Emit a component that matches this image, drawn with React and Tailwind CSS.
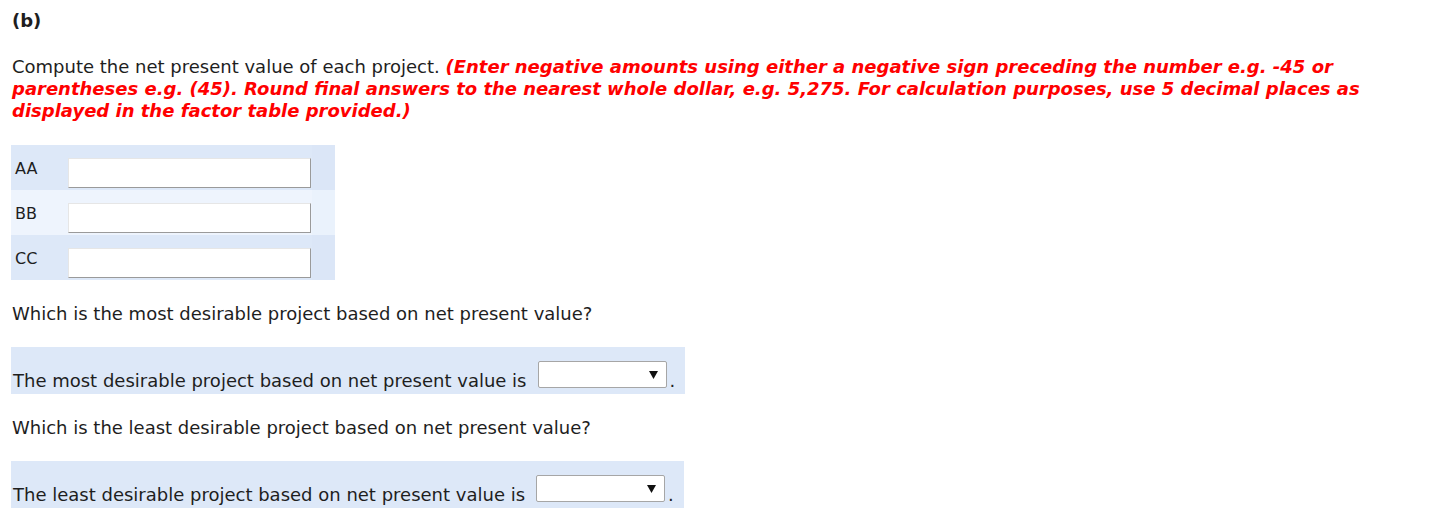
import React from "react";

function Row({ label, bg, bg3 }) {
  return (
    <div className={`flex h-[45px] ${bg}`}>
      <div className="w-[55px] pl-[4px] pt-[14px] text-[16px] leading-[20px]">{label}</div>
      <div className="w-[246px] flex items-end pb-[2px] pl-[2px]">
        <div className="w-[243px] h-[30px] bg-white border border-t-[#e6e6e6] border-l-[#e6e6e6] border-r-[#9a9a9a] border-b-[#9a9a9a]"></div>
      </div>
      <div className={`w-[23px] ${bg3}`}></div>
    </div>
  );
}

function SelectBox() {
  return (
    <div className="ml-[11px] mb-[4px] w-[129px] h-[27px] bg-white border border-[#a6a6a6] rounded-[2px] flex items-center justify-end pr-[8px]">
      <svg width="9" height="9" viewBox="0 0 9 9">
        <polygon points="0,1 9,1 4.5,9" fill="#111" />
      </svg>
    </div>
  );
}

function Band({ text }) {
  return (
    <div className="inline-flex items-end bg-[#dde8f8] pt-[14px] pb-[2px] pl-[2px] pr-[10px]">
      <span className="leading-[22px]">{text}</span>
      <SelectBox />
      <span className="leading-[22px] ml-[3px]">.</span>
    </div>
  );
}

export default function App() {
  return (
    <div
      className="bg-white text-[#1e1e1e] text-[18px] leading-[22px] pl-[11px] pt-[10px] pb-[13px]"
      style={{ fontFamily: '"DejaVu Sans", Verdana, sans-serif' }}
    >
      <div className="pl-[1px] font-bold">(b)</div>
      <div className="pl-[1px] mt-[24px]">
        Compute the net present value of each project.{" "}
        <span className="text-[#ff0000] font-bold italic">
          (Enter negative amounts using either a negative sign preceding the number e.g. -45 or
          <br />
          parentheses e.g. (45). Round final answers to the nearest whole dollar, e.g. 5,275. For calculation purposes, use 5 decimal places as
          <br />
          displayed in the factor table provided.)
        </span>
      </div>
      <div className="mt-[23px] w-[324px]">
        <Row label="AA" bg="bg-[#dde8f8]" bg3="bg-[#dbe6f7]" />
        <Row label="BB" bg="bg-[#eef4fd]" bg3="bg-[#eaf2fc]" />
        <Row label="CC" bg="bg-[#dde8f8]" bg3="bg-[#dbe6f7]" />
      </div>
      <div className="pl-[1px] mt-[23px]">Which is the most desirable project based on net present value?</div>
      <div className="mt-[22px]">
        <Band text="The most desirable project based on net present value is" />
      </div>
      <div className="pl-[1px] mt-[23px]">Which is the least desirable project based on net present value?</div>
      <div className="mt-[22px]">
        <Band text="The least desirable project based on net present value is" />
      </div>
    </div>
  );
}
